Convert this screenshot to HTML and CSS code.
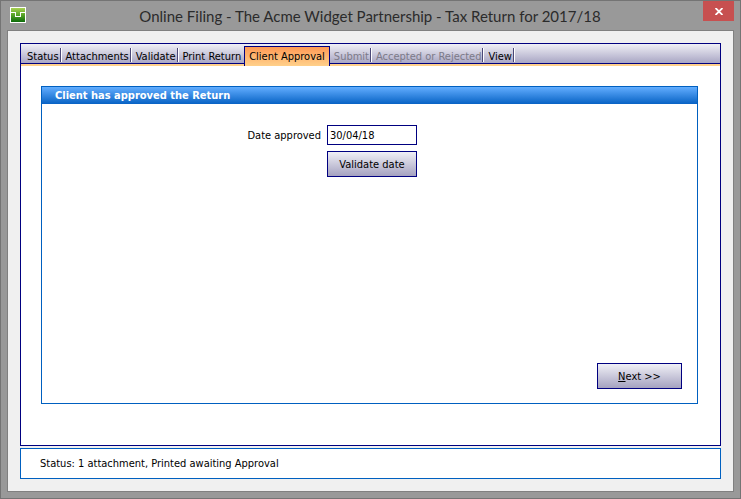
FILE: index.html
```html
<!DOCTYPE html>
<html lang="en">
<head>
<meta charset="UTF-8">
<meta name="viewport" content="width=device-width, initial-scale=1.0">
<title>Online Filing</title>
<link rel="stylesheet" href="styles.css">
</head>
<body>
  <div class="window">
    <header class="titlebar">
      <svg class="app-icon" viewBox="0 0 16 16" aria-hidden="true" shape-rendering="crispEdges">
        <defs>
          <linearGradient id="green" x1="0" y1="0" x2="0" y2="1">
            <stop offset="0" stop-color="#a9d153"/>
            <stop offset="0.45" stop-color="#5fa82a"/>
            <stop offset="1" stop-color="#0c6b0a"/>
          </linearGradient>
        </defs>
        <rect width="16" height="16" fill="#fff"/>
        <rect x="1" y="1" width="14" height="14" fill="url(#green)"/>
        <path d="M1 5.5H5.5V9.5H10.5V5.5H15" fill="none" stroke="#fff"/>
      </svg>
      <h1 class="title">Online Filing - The Acme Widget Partnership - Tax Return for 2017/18</h1>
      <button class="close-btn" type="button" aria-label="Close">
        <svg class="close-icon" viewBox="0 0 8 7" aria-hidden="true">
          <path d="M0.5 0L7.5 7M7.5 0L0.5 7" stroke="#fff" stroke-width="1.8"/>
        </svg>
      </button>
    </header>
    <main class="client">
      <div class="pages">
        <nav class="tabs">
          <button class="tab" type="button">Status</button>
          <button class="tab" type="button">Attachments</button>
          <button class="tab" type="button">Validate</button>
          <button class="tab before-active" type="button">Print Return</button>
          <button class="tab active" type="button">Client Approval</button>
          <button class="tab" type="button" disabled>Submit</button>
          <button class="tab" type="button" disabled>Accepted or Rejected</button>
          <button class="tab" type="button">View</button>
        </nav>
        <section class="group">
          <h2 class="group-title">Client has approved the Return</h2>
          <div class="form">
            <label class="label" for="dateApproved">Date approved</label>
            <input class="date-box" id="dateApproved" type="text" value="30/04/18">
            <button class="btn validate-btn" type="button">Validate date</button>
          </div>
          <div class="actions">
            <button class="btn" type="button" accesskey="n"><u>N</u>ext &gt;&gt;</button>
          </div>
        </section>
      </div>
      <footer class="status">Status: 1 attachment, Printed awaiting Approval</footer>
    </main>
  </div>
</body>
</html>
```
FILE: styles.css
```css
* {
  box-sizing: border-box;
}
html, body {
  height: 100%;
  margin: 0;
}
body, button, input {
  font-family: Tahoma, "DejaVu Sans Condensed", sans-serif;
  font-size: 11px;
  color: #000;
}
.window {
  display: flex;
  flex-direction: column;
  min-height: 100%;
  padding: 0 6px 6px;
  background: #999;
  border: 1px solid #747474;
}
.titlebar {
  display: flex;
  align-items: flex-start;
  height: 29px;
}
.app-icon {
  width: 16px;
  height: 16px;
  margin: 6px 0 0 3px;
}
.title {
  flex: 1;
  margin: 0;
  padding-left: 11px;
  font-family: "Segoe UI", Lato, sans-serif;
  font-size: 15px;
  font-weight: 400;
  line-height: 30px;
  text-align: center;
  white-space: nowrap;
  color: #2b2b2b;
}
.close-btn {
  display: flex;
  align-items: center;
  justify-content: center;
  width: 31px;
  height: 20px;
  padding: 0;
  border: none;
  background: #c75050;
}
.close-icon {
  width: 8px;
  height: 7px;
}
.client {
  flex: 1;
  display: flex;
  flex-direction: column;
  gap: 2px;
  padding: 12px;
  background: #f0f0f0;
  border: 1px solid #808080;
}
.pages {
  flex: 1;
  display: flex;
  flex-direction: column;
  background: #fff;
  border: 1px solid #000080;
}
/* tab strip, with the navy rule and the orange band below it */
.tabs {
  display: flex;
  align-items: flex-end;
  height: 22px;
  padding: 0 2px;
  background: linear-gradient(#f0f0f6, #a9a6c4 19px, #000080 19px, #000080 20px, #ffd08a 20px);
}
.tab {
  position: relative;
  height: 14px;
  margin-bottom: 4px;
  padding: 2px 3px 0 4px;
  border: none;
  background: none;
  line-height: 14px;
  white-space: nowrap;
}
.tab::after {
  content: '';
  position: absolute;
  top: 0;
  right: 0;
  width: 2px;
  height: 14px;
  background: linear-gradient(90deg, #4b4877 50%, #fff 50%);
}
.tab:disabled {
  color: #7c7a88;
}
.tab.before-active::after, .tab.active::after {
  display: none;
}
.tab.active {
  height: 20px;
  margin-bottom: 0;
  padding: 0 4px;
  border: 1px solid #000080;
  border-bottom: none;
  background: linear-gradient(#ff9a55, #ffd08a);
}
.group {
  flex: 1;
  display: flex;
  flex-direction: column;
  margin: 20px 22px 41px 20px;
  border: 1px solid #0060c0;
}
.group-title {
  margin: 0;
  padding: 1px 0 0 13px;
  background: linear-gradient(#62adff, #0762c4);
  font-size: 11px;
  line-height: 16px;
  color: #fff;
}
.form {
  display: grid;
  grid-template-columns: 279fr 90px 274fr;
  gap: 6px;
  align-items: center;
  padding-top: 21px;
}
.label {
  text-align: right;
}
.date-box {
  width: 100%;
  height: 20px;
  padding: 0 2px;
  border: 1px solid #000080;
  background: #fff;
}
.btn {
  width: 85px;
  height: 26px;
  padding: 0;
  border: 1px solid #000080;
  background: linear-gradient(#f0f0f6, #a5a2c0);
}
.validate-btn {
  grid-column: 2;
  width: 100%;
}
.actions {
  display: flex;
  justify-content: flex-end;
  margin-top: auto;
  padding: 14px 15px;
}
.status {
  padding: 0 19px;
  background: #fff;
  border: 1px solid #0060c0;
  line-height: 29px;
}
```
